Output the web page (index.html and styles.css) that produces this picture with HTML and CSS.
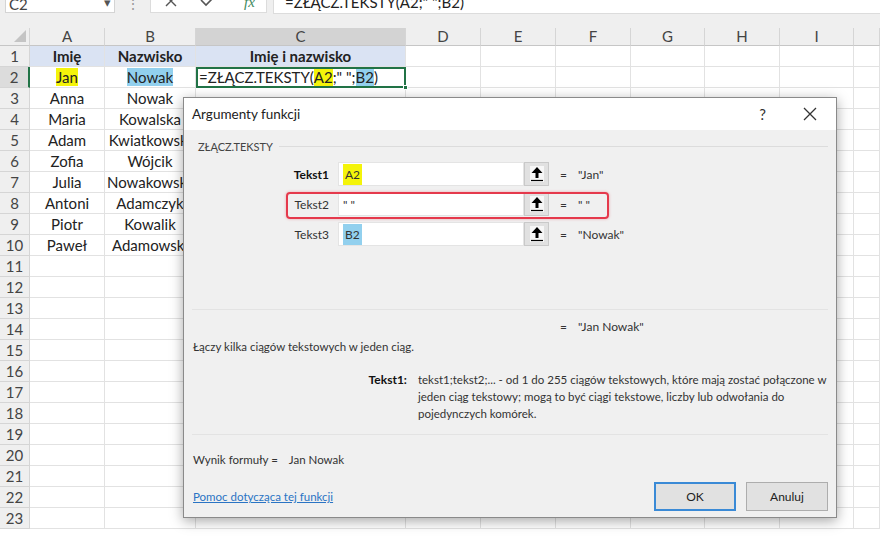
FILE: index.html
```html
<!DOCTYPE html>
<html lang="pl">
<head>
<meta charset="utf-8">
<title>Argumenty funkcji</title>
<link rel="stylesheet" href="styles.css">
</head>
<body>
<div class="fbar">
  <div class="namebox"><span class="nb-text">C2</span><span class="caret">▾</span></div>
  <div class="fsep">⋮</div>
  <div class="fbtns">
    <svg class="ficon" width="14" height="12" viewBox="0 0 14 12"><path d="M2 -4 L12 6 M12 -4 L2 6" stroke="#555" stroke-width="1.4" fill="none"/></svg>
    <svg class="ficon" width="16" height="12" viewBox="0 0 16 12"><path d="M1 0 L6 5 L15 -4" stroke="#555" stroke-width="1.6" fill="none"/></svg>
    <span class="fx">fx</span>
  </div>
  <div class="finput"><span class="ftext">=ZŁĄCZ.TEKSTY(A2;" ";B2)</span></div>
</div>

<table class="sheet">
  <colgroup>
    <col class="c-rh"><col class="c-a"><col class="c-b"><col class="c-c"><col class="c-d"><col class="c-d"><col class="c-d"><col class="c-g"><col class="c-d"><col class="c-g"><col class="c-rest">
  </colgroup>
  <tr class="hdr">
    <th class="corner"><span class="tri"></span></th><th>A</th><th>B</th><th class="csel">C</th><th>D</th><th>E</th><th>F</th><th>G</th><th>H</th><th>I</th><th></th>
  </tr>
  <tr><th>1</th><td class="fill ctr b">Imię</td><td class="fill ctr b">Nazwisko</td><td class="fill ctr b">Imię i nazwisko</td><td></td><td></td><td></td><td></td><td></td><td></td><td></td></tr>
  <tr><th class="rsel">2</th><td class="ctr"><span class="hy">Jan</span></td><td class="ctr"><span class="hb">Nowak</span></td><td class="sel">=ZŁĄCZ.TEKSTY(<span class="hy">A2</span>;" ";<span class="hb">B2</span>)<span class="handle"></span></td><td></td><td></td><td></td><td></td><td></td><td></td><td></td></tr>
  <tr><th>3</th><td class="ctr">Anna</td><td class="ctr">Nowak</td><td></td><td></td><td></td><td></td><td></td><td></td><td></td><td></td></tr>
  <tr><th>4</th><td class="ctr">Maria</td><td class="ctr">Kowalska</td><td></td><td></td><td></td><td></td><td></td><td></td><td></td><td></td></tr>
  <tr><th>5</th><td class="ctr">Adam</td><td class="ctr">Kwiatkowski</td><td></td><td></td><td></td><td></td><td></td><td></td><td></td><td></td></tr>
  <tr><th>6</th><td class="ctr">Zofia</td><td class="ctr">Wójcik</td><td></td><td></td><td></td><td></td><td></td><td></td><td></td><td></td></tr>
  <tr><th>7</th><td class="ctr">Julia</td><td class="ctr">Nowakowska</td><td></td><td></td><td></td><td></td><td></td><td></td><td></td><td></td></tr>
  <tr><th>8</th><td class="ctr">Antoni</td><td class="ctr">Adamczyk</td><td></td><td></td><td></td><td></td><td></td><td></td><td></td><td></td></tr>
  <tr><th>9</th><td class="ctr">Piotr</td><td class="ctr">Kowalik</td><td></td><td></td><td></td><td></td><td></td><td></td><td></td><td></td></tr>
  <tr><th>10</th><td class="ctr">Paweł</td><td class="ctr">Adamowski</td><td></td><td></td><td></td><td></td><td></td><td></td><td></td><td></td></tr>
  <tr><th>11</th><td></td><td></td><td></td><td></td><td></td><td></td><td></td><td></td><td></td><td></td></tr>
  <tr><th>12</th><td></td><td></td><td></td><td></td><td></td><td></td><td></td><td></td><td></td><td></td></tr>
  <tr><th>13</th><td></td><td></td><td></td><td></td><td></td><td></td><td></td><td></td><td></td><td></td></tr>
  <tr><th>14</th><td></td><td></td><td></td><td></td><td></td><td></td><td></td><td></td><td></td><td></td></tr>
  <tr><th>15</th><td></td><td></td><td></td><td></td><td></td><td></td><td></td><td></td><td></td><td></td></tr>
  <tr><th>16</th><td></td><td></td><td></td><td></td><td></td><td></td><td></td><td></td><td></td><td></td></tr>
  <tr><th>17</th><td></td><td></td><td></td><td></td><td></td><td></td><td></td><td></td><td></td><td></td></tr>
  <tr><th>18</th><td></td><td></td><td></td><td></td><td></td><td></td><td></td><td></td><td></td><td></td></tr>
  <tr><th>19</th><td></td><td></td><td></td><td></td><td></td><td></td><td></td><td></td><td></td><td></td></tr>
  <tr><th>20</th><td></td><td></td><td></td><td></td><td></td><td></td><td></td><td></td><td></td><td></td></tr>
  <tr><th>21</th><td></td><td></td><td></td><td></td><td></td><td></td><td></td><td></td><td></td><td></td></tr>
  <tr><th>22</th><td></td><td></td><td></td><td></td><td></td><td></td><td></td><td></td><td></td><td></td></tr>
  <tr><th>23</th><td></td><td></td><td></td><td></td><td></td><td></td><td></td><td></td><td></td><td></td></tr>
</table>

<div class="dlg">
  <div class="dlg-title">
    <span class="dlg-name">Argumenty funkcji</span>
    <span class="help">?</span>
    <svg class="close" width="14" height="14" viewBox="0 0 14 14"><path d="M1 1 L13 13 M13 1 L1 13" stroke="#333" stroke-width="1.3" fill="none"/></svg>
  </div>
  <div class="dlg-body">
    <div class="grp"><span class="grp-label">ZŁĄCZ.TEKSTY</span><span class="grp-line"></span></div>
    <div class="args">
      <div class="arg">
        <span class="arg-label b">Tekst1</span>
        <div class="inp"><span class="hy">A2</span></div>
        <div class="ref"><svg width="14" height="16" viewBox="0 0 14 16"><path d="M7 1 L1.5 7 L5.5 7 L5.5 12 L8.5 12 L8.5 7 L12.5 7 Z" fill="#000"/><path d="M1 14.5 H13" stroke="#000" stroke-width="1.2"/></svg></div>
        <span class="eq">=</span><span class="val">"Jan"</span>
      </div>
      <div class="arg">
        <span class="arg-label">Tekst2</span>
        <div class="inp">" "</div>
        <div class="ref"><svg width="14" height="16" viewBox="0 0 14 16"><path d="M7 1 L1.5 7 L5.5 7 L5.5 12 L8.5 12 L8.5 7 L12.5 7 Z" fill="#000"/><path d="M1 14.5 H13" stroke="#000" stroke-width="1.2"/></svg></div>
        <span class="eq">=</span><span class="val">" "</span>
      </div>
      <div class="arg">
        <span class="arg-label">Tekst3</span>
        <div class="inp"><span class="hb">B2</span></div>
        <div class="ref"><svg width="14" height="16" viewBox="0 0 14 16"><path d="M7 1 L1.5 7 L5.5 7 L5.5 12 L8.5 12 L8.5 7 L12.5 7 Z" fill="#000"/><path d="M1 14.5 H13" stroke="#000" stroke-width="1.2"/></svg></div>
        <span class="eq">=</span><span class="val">"Nowak"</span>
      </div>
    </div>
    <div class="rule rule-1"></div>
    <div class="result"><span class="eq">=</span><span class="val">"Jan Nowak"</span></div>
    <p class="fdesc">Łączy kilka ciągów tekstowych w jeden ciąg.</p>
    <div class="adesc">
      <span class="adesc-name">Tekst1:</span>
      <p class="adesc-text">tekst1;tekst2;... - od 1 do 255 ciągów tekstowych, które mają zostać połączone w jeden ciąg tekstowy; mogą to być ciągi tekstowe, liczby lub odwołania do pojedynczych komórek.</p>
    </div>
    <div class="rule rule-2"></div>
    <div class="wynik"><span>Wynik formuły =</span><span class="wynik-val">Jan Nowak</span></div>
    <div class="foot">
      <a class="help-link" href="#">Pomoc dotycząca tej funkcji</a>
      <div class="btns"><button class="btn ok">OK</button><button class="btn">Anuluj</button></div>
    </div>
  </div>
  <div class="annot"></div>
</div>
</body>
</html>
```
FILE: styles.css
```css
* { box-sizing: border-box; }
html, body { margin: 0; padding: 0; }
body {
  width: 880px; height: 540px; overflow: hidden; background: #fff;
  font-family: Lato, "Liberation Sans", sans-serif; color: #222;
  position: relative;
}

/* formula bar */
.fbar { height: 28px; background: #efefef; display: flex; align-items: flex-start; overflow: hidden; }
.namebox {
  margin-left: 5px; width: 110px; height: 13px; background: #fff;
  border: 1px solid #d4d4d4; border-top: 0; display: flex; justify-content: space-between;
  overflow: hidden; font-size: 15px; color: #444;
}
.nb-text { margin-top: -5px; margin-left: 3px; line-height: 18px; }
.caret { margin-top: -7px; margin-right: 3px; font-size: 13px; color: #555; line-height: 18px; }
.fsep { width: 35px; text-align: center; color: #999; font-size: 14px; line-height: 14px; margin-top: -3px; }
.fbtns {
  width: 117px; height: 13px; background: #fff; display: flex; align-items: flex-start;
  gap: 22px; padding-left: 13px; overflow: hidden; border: 1px solid #dcdcdc; border-top: 0;
}
.ficon { display: block; }
.fx { font-family: "Liberation Serif", serif; font-style: italic; color: #3f8a5e; font-size: 15px; line-height: 16px; margin-top: -6px; margin-left: 6px; }
.finput {
  margin-left: 6px; flex: 1; height: 14px; background: #fff; overflow: hidden;
  border: 1px solid #dcdcdc; border-top: 0; border-right: 0;
}
.ftext { display: block; margin-top: -7px; padding-left: 11px; font-size: 15px; line-height: 18px; color: #222; }

/* sheet */
.sheet { border-collapse: separate; border-spacing: 0; table-layout: fixed; width: 880px; font-size: 15px; }
.c-rh { width: 30px; } .c-a { width: 75px; } .c-b { width: 91px; } .c-c { width: 210px; }
.c-d { width: 75px; } .c-g { width: 74px; } .c-rest { width: 26px; }
.sheet tr { height: 21px; }
.sheet tr.hdr { height: 18px; }
.sheet th {
  background: #efefef; font-weight: normal; color: #444; padding: 0;
  border-right: 1px solid #d5d5d5; border-bottom: 1px solid #d5d5d5; font-size: 15px; line-height: 17px;
}
.sheet tr.hdr th { border-bottom: 1px solid #c6c6c6; }
.sheet td {
  padding: 0 2px; border-right: 1px solid #e2e2e2; border-bottom: 1px solid #e2e2e2;
  white-space: nowrap; overflow: hidden; line-height: 19px; color: #222;
}
.corner { position: relative; }
.tri { position: absolute; right: 3px; bottom: 3px; width: 0; height: 0; border-left: 12px solid transparent; border-bottom: 12px solid #c4c4c4; }
.sheet th.csel { background: #d3d3d3; border-bottom: 2px solid #217346; }
.sheet th.rsel { background: #dcdcdc; border-right: 2px solid #217346; }
.ctr { text-align: center; }
.b { font-weight: bold; }
.fill { background: #dae3f3; }
.hy { background: #f4f40a; }
.hb { background: #92d0ee; }
.sheet td.sel { position: relative; overflow: visible; outline: 2px solid #217346; outline-offset: -2px; padding-left: 3px; }
.handle { position: absolute; right: -3px; bottom: -3px; width: 5px; height: 5px; background: #217346; border: 1px solid #fff; }

/* dialog */
.dlg {
  position: absolute; left: 183px; top: 97px; width: 654px; height: 421px;
  background: #f0f0f0; border: 1px solid #8a8a8a;
  box-shadow: 0 3px 12px rgba(0,0,0,0.35);
  font-family: Lato, "Liberation Sans", sans-serif; font-size: 11.5px; color: #333;
}
.dlg-title { height: 32px; background: #fff; display: flex; align-items: center; padding-left: 8px; }
.dlg-name { font-size: 13.5px; color: #222; flex: 1; }
.help { font-size: 15px; color: #333; margin-right: 37px; }
.close { margin-right: 19px; }
.dlg-body { padding: 9px 8px 0 8px; }
.grp { display: flex; align-items: center; height: 14px; }
.grp-label { font-size: 11px; color: #444; margin-left: 6px; margin-right: 6px; }
.grp-line { flex: 1; height: 1px; background: #dcdcdc; }
.args { margin-top: 9px; display: flex; flex-direction: column; gap: 6px; }
.arg { display: flex; align-items: center; height: 24px; font-size: 12px; }
.arg-label { width: 137px; text-align: right; margin-right: 9px; color: #333; }
.arg-label.b { color: #111; }
.inp {
  width: 186px; height: 24px; background: #fff; border: 1px solid #e4e4e4;
  display: flex; align-items: center; padding-left: 4px; color: #333;
}
.inp .hy, .inp .hb { padding: 3px 2px; }
.ref {
  width: 25px; height: 24px; background: #e1e1e1; border: 1px solid #c9c9c9;
  display: flex; align-items: center; justify-content: center;
}
.ref svg { background: #f7f7f7; }
.eq { width: 18px; text-align: right; margin-right: 11px; color: #333; }
.val { color: #333; }
.rule { height: 1px; background: #e3e3e3; }
.rule-1 { margin-top: 63px; }
.result { display: flex; align-items: center; height: 16px; margin-top: 8px; padding-left: 357px; font-size: 12px; }
.fdesc { margin: 5px 0 0 1px; line-height: 16px; }
.adesc { display: flex; margin-top: 16px; }
.adesc-name { width: 217px; text-align: right; font-weight: bold; color: #111; line-height: 17px; font-size: 12px; }
.adesc-text { margin: 0 0 0 11px; width: 414px; line-height: 17px; }
.rule-2 { margin-top: 12px; }
.wynik { margin-top: 17px; padding-left: 1px; line-height: 16px; }
.wynik-val { margin-left: 11px; }
.foot { display: flex; justify-content: space-between; align-items: center; margin-top: 14px; padding-right: 0; }
.help-link { color: #2a74c4; text-decoration: underline; padding-left: 1px; }
.btns { display: flex; gap: 10px; }
.btn {
  width: 82px; height: 29px; background: #e1e1e1; border: 1px solid #adadad;
  font-family: inherit; font-size: 12px; color: #222; padding: 0;
}
.btn.ok { border: 2px solid #3a8ad6; }
.annot {
  position: absolute; left: 102px; top: 94px; width: 323px; height: 27px;
  border: 2px solid #e5394c; border-radius: 4px; box-shadow: 0 0 3px rgba(229,57,76,0.4);
}
```
